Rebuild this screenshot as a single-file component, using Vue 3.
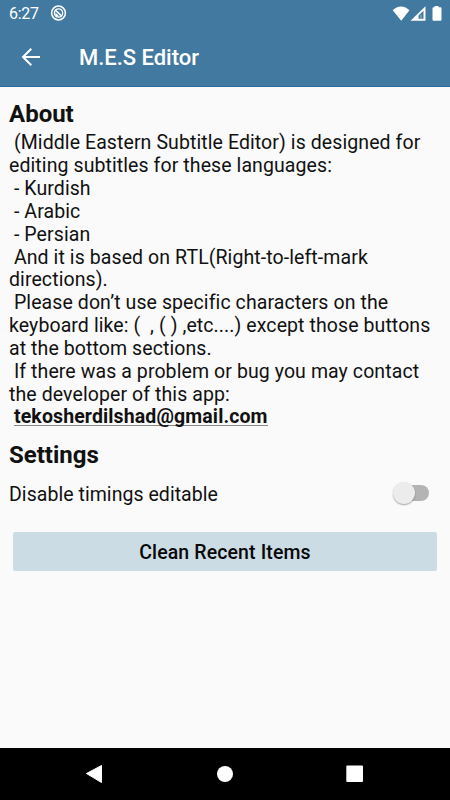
<script setup>
const aboutText = ` (Middle Eastern Subtitle Editor) is designed for
editing subtitles for these languages:
 - Kurdish
 - Arabic
 - Persian
 And it is based on RTL(Right-to-left-mark
directions).
 Please don’t use specific characters on the
keyboard like: (  , ( ) ,etc....) except those buttons
at the bottom sections.
 If there was a problem or bug you may contact
the developer of this app:`
</script>

<template>
  <div class="screen">
    <header class="top">
      <div class="status">
        <span class="clock">6:27</span>
        <svg class="notice" width="17" height="17" viewBox="0 0 17 17">
          <circle cx="8.5" cy="8" r="6.9" fill="none" stroke="#fff" stroke-width="1.5" />
          <circle cx="8.5" cy="8" r="4.2" fill="none" stroke="#fff" stroke-width="1.2" />
          <path d="M5.2 5.2 11.8 11.2" fill="none" stroke="#fff" stroke-width="1.6" />
          <path d="M5.2 7.6 8.6 10.8V11.8L5.6 10.8Z" fill="#fff" />
        </svg>
        <svg class="signals" width="50" height="16" viewBox="0 0 50 16">
          <path d="M.7 4.3C5.300-.9 12.800-.9 17.400 4.300L9.200 14.700Z" fill="#fff" />
          <path fill-rule="evenodd" d="M18.500 14.800 33.500.2V14.800ZM26.500 12.800H31.500V4.800L26.500 9.600Z" fill="#fff" />
          <path d="M29 8.800V12" stroke="#fff" stroke-width="1.400" opacity=".35" />
          <path d="M42.500 0h4v1.300h2q1 0 1 1v11.500q0 1-1 1h-7q-1 0-1-1V2.300q0-1 1-1h1Z" fill="#fff" />
        </svg>
      </div>
      <div class="toolbar">
        <svg width="20" height="20" viewBox="0 0 20 20">
          <path d="M19 10H2.500M10.300 1.700 2 10l8.300 8.300" fill="none" stroke="#fff" stroke-width="2" />
        </svg>
        <h1>M.E.S Editor</h1>
      </div>
    </header>
    <main>
      <h2>About</h2>
      <p class="about">{{ aboutText }}</p>
      <p class="mail"><a>tekosherdilshad@gmail.com</a></p>
      <h2 class="settings">Settings</h2>
      <div class="option">
        <span>Disable timings editable</span>
        <span class="switch"><i class="thumb"></i></span>
      </div>
      <button>Clean Recent Items</button>
    </main>
    <nav>
      <svg width="450" height="52" viewBox="0 0 450 52">
        <path d="M86.500 25.500 101.500 17.500V34.500Z" fill="#fff" stroke="#fff" stroke-width="1" stroke-linejoin="round" />
        <circle cx="225" cy="26" r="8" fill="#fff" />
        <rect x="346.300" y="17.500" width="16.700" height="16.500" rx="1" fill="#fff" />
      </svg>
    </nav>
  </div>
</template>

<style>
body { margin: 0; background: #fafafa; }
</style>

<style scoped>
.screen {
  width: 450px;
  height: 800px;
  display: flex;
  flex-direction: column;
  background: #fafafa;
  color: #111;
  font-family: Roboto, sans-serif;
  overflow: hidden;
}
.top {
  height: 87px;
  box-sizing: border-box;
  background: #4279a0;
  border-bottom: 1px solid #2c6c9b;
  color: #fff;
  flex: none;
}
.status {
  height: 27px;
  display: flex;
  align-items: center;
  padding: 0 8px 0 9px;
}
.clock { font-size: 16px; letter-spacing: -0.3px; width: 41px; }
.signals { margin-left: auto; }
.toolbar {
  height: 60px;
  display: flex;
  align-items: center;
  padding-left: 21px;
}
h1 {
  margin: 0 0 0 38px;
  font-size: 22px;
  font-weight: 500;
  letter-spacing: -0.03px;
}
main { flex: 1; padding: 12px 9px 0; }
h2 {
  margin: 0;
  font-size: 24px;
  line-height: 31px;
  font-weight: 700;
}
p { margin: 0; }
.about, .mail {
  font-size: 19.5px;
  line-height: 22.85px;
  white-space: pre;
  letter-spacing: 0.09px;
}
.about { margin-top: 2.3px; }
.mail {
  height: 22.85px;
  padding-left: 5px;
  font-weight: 700;
  letter-spacing: 0.12px;
}
.mail a { border-bottom: 1px solid #888; display: inline-block; line-height: 17px; }
.settings { margin-top: 10.7px; }
.option {
  display: flex;
  justify-content: space-between;
  align-items: center;
  height: 40px;
  margin-top: 4px;
  font-size: 19.5px;
  letter-spacing: 0.05px;
}
.switch {
  width: 30px;
  height: 16px;
  border-radius: 8px;
  background: #b4b4b4;
  margin-right: 12px;
  margin-top: -3px;
  display: flex;
  align-items: center;
}
.thumb {
  width: 22px;
  height: 22px;
  flex: none;
  margin-left: -6px;
  border-radius: 50%;
  background: #ececec;
  box-shadow: 0 1px 1.5px rgba(0, 0, 0, 0.35);
}
button {
  display: block;
  width: 424px;
  height: 39.5px;
  margin: 17px 0 0 4px;
  padding: 2px 0 0;
  border: 0;
  border-radius: 2px;
  background: #cbdce4;
  color: #080808;
  font: 500 19.5px Roboto, sans-serif;
  letter-spacing: 0.12px;
}
nav { height: 52px; background: #000; flex: none; }
nav svg { display: block; }
</style>
